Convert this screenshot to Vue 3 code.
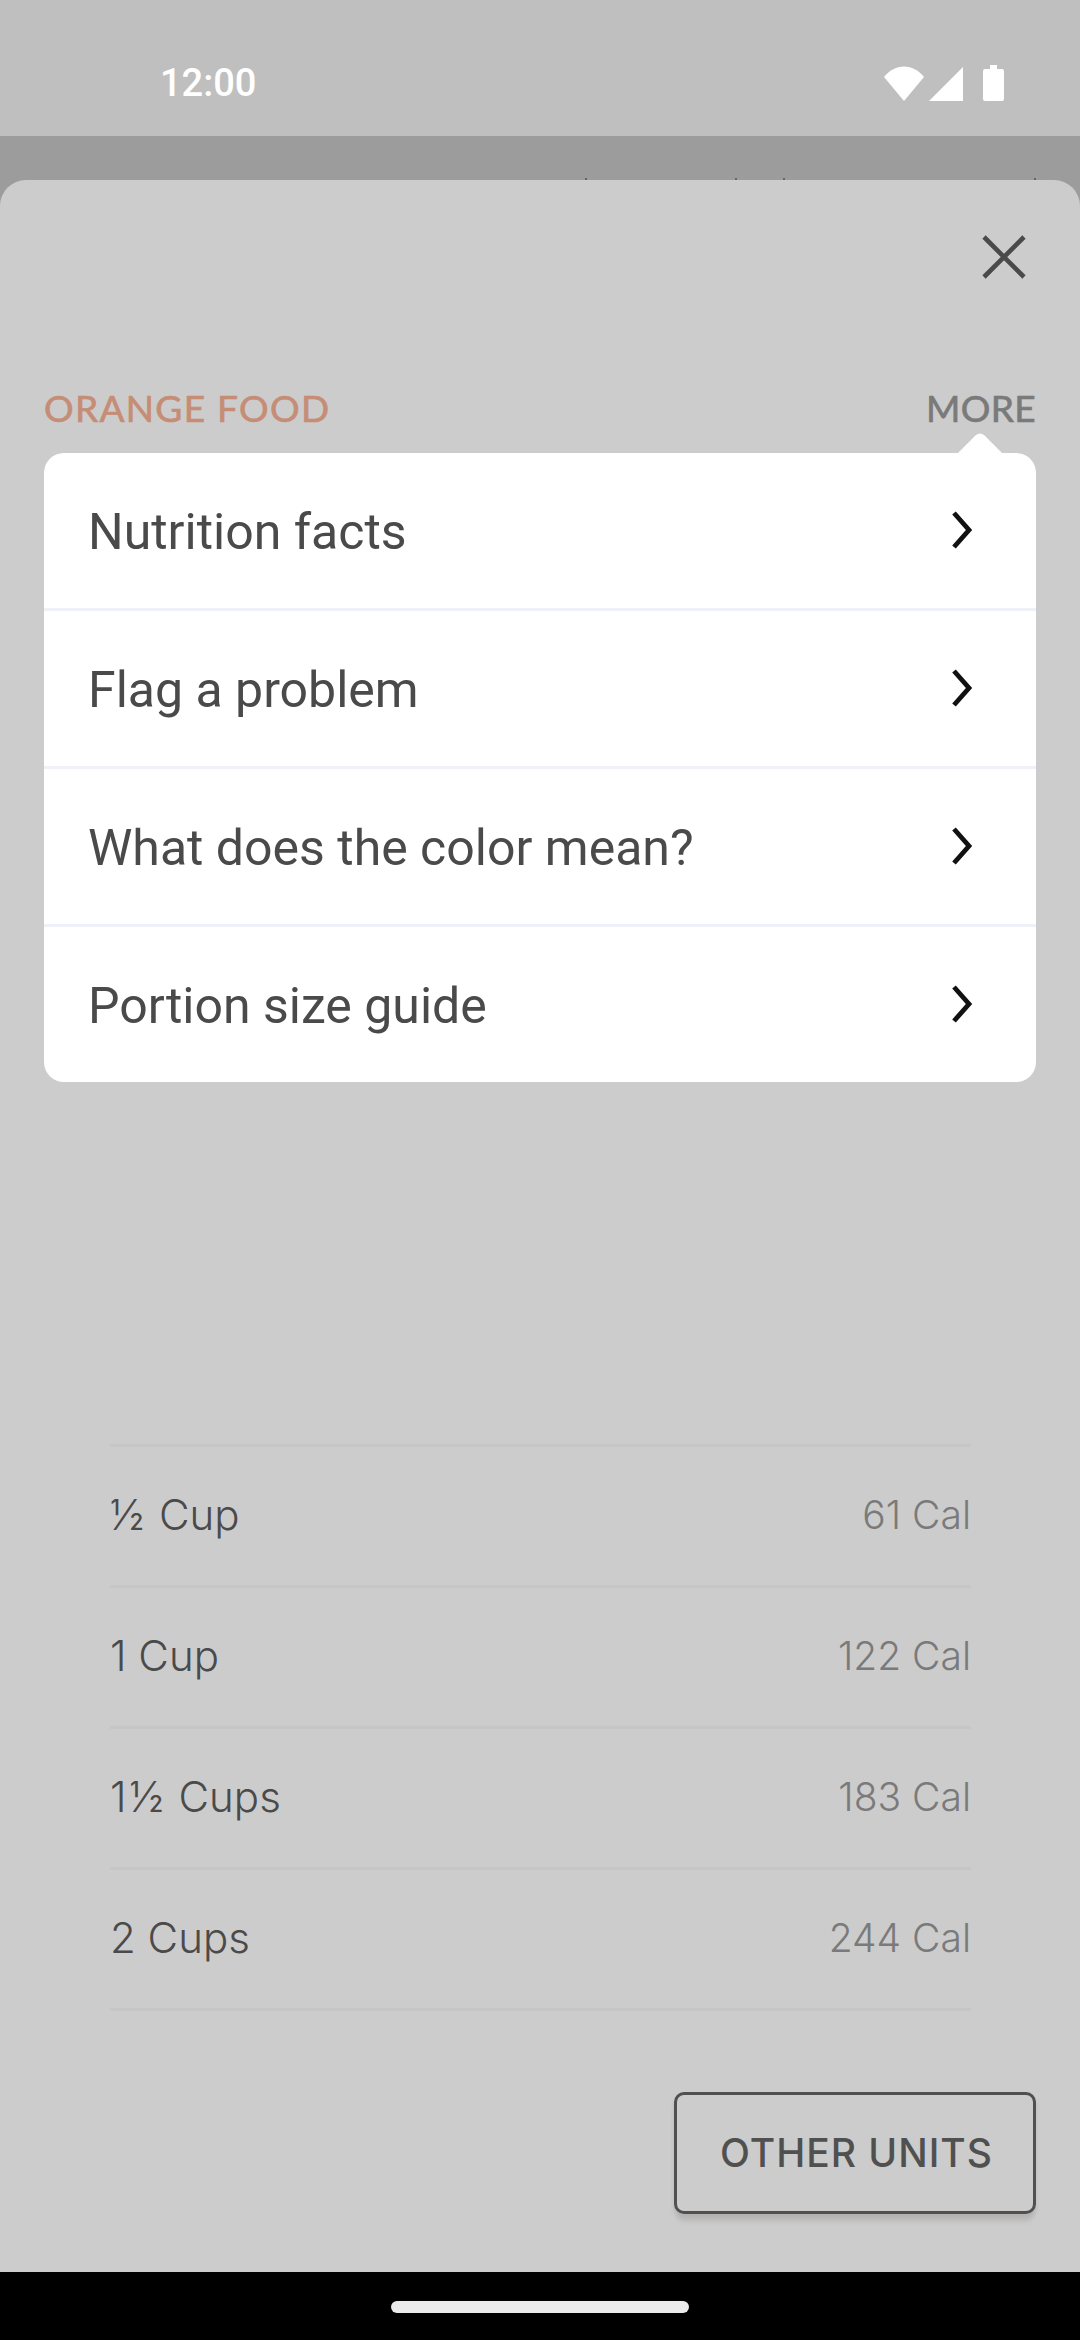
<script setup>
const menu = ['Nutrition facts', 'Flag a problem', 'What does the color mean?', 'Portion size guide']
const portions = [
  { frac: '½', label: ' Cup', cal: '61 Cal' },
  { frac: '', label: '1 Cup', cal: '122 Cal' },
  { frac: '1½', label: ' Cups', cal: '183 Cal' },
  { frac: '', label: '2 Cups', cal: '244 Cal' }
]
const specks = [585, 735, 783, 1034]
</script>

<template>
  <div class="screen">
    <div class="status">
      <span class="time">12:00</span>
      <div class="status-icons">
        <svg width="40" height="35" viewBox="0 0 40 35"><path d="M0 11 C11 -3 29 -3 40 11 L20 35 Z" fill="#fff"/></svg>
        <svg class="signal" width="34" height="34" viewBox="0 0 34 34"><path d="M34 0 V34 H0 Z" fill="#fff"/></svg>
        <svg class="battery" width="21" height="36" viewBox="0 0 21 36"><path d="M7 0 H14 V4 H19 Q21 4 21 6 V34 Q21 36 19 36 H2 Q0 36 0 34 V6 Q0 4 2 4 H7 Z" fill="#fff"/></svg>
      </div>
    </div>
    <div class="band">
      <i v-for="x in specks" :key="x" class="speck" :style="{ left: x + 'px' }"></i>
    </div>
    <div class="sheet">
      <div class="close-row">
        <svg width="44" height="44" viewBox="0 0 44 44"><path d="M2 2 L42 42 M42 2 L2 42" stroke="#4a4a4a" stroke-width="4.6" fill="none"/></svg>
      </div>
      <div class="head">
        <span class="food">ORANGE FOOD</span>
        <span class="more">MORE</span>
      </div>
      <div class="menu">
        <svg class="pointer" width="46" height="21" viewBox="0 0 46 21"><path d="M0 21 L19 2 Q23 -1 27 2 L46 21 Z" fill="#fff"/></svg>
        <div v-for="item in menu" :key="item" class="menu-row">
          <span>{{ item }}</span>
          <svg width="24" height="40" viewBox="0 0 24 40"><path d="M4 3 L19 20 L4 37" stroke="#111" stroke-width="4.8" fill="none"/></svg>
        </div>
      </div>
      <div class="portions">
        <div v-for="p in portions" :key="p.label" class="portion">
          <span class="label"><span class="frac">{{ p.frac }}</span>{{ p.label }}</span>
          <span class="cal">{{ p.cal }}</span>
        </div>
      </div>
      <div class="actions">
        <div class="units">OTHER UNITS</div>
      </div>
    </div>
    <div class="nav"><div class="pill"></div></div>
  </div>
</template>

<style scoped>
.screen {
  width: 1080px;
  height: 2340px;
  display: flex;
  flex-direction: column;
  overflow: hidden;
  background: #9c9c9c;
}
.status {
  height: 136px;
  flex: none;
  background: #bfbfbf;
  display: flex;
  align-items: center;
  justify-content: space-between;
  padding: 29px 76px 0 160px;
  box-sizing: border-box;
}
.time {
  font: 500 38px Roboto, sans-serif;
  color: #fff;
}
.status-icons {
  display: flex;
  align-items: flex-end;
}
.signal { margin-left: 5px; }
.battery { margin-left: 20px; }
.band {
  position: relative;
  height: 44px;
  flex: none;
  background: #9c9c9c;
}
.speck {
  position: absolute;
  bottom: 0;
  width: 2px;
  height: 2px;
  background: #666;
}
.sheet {
  flex: 1;
  background: #ccc;
  border-radius: 26px 26px 0 0;
  padding: 0 44px;
  box-sizing: border-box;
  display: flex;
  flex-direction: column;
}
.close-row {
  display: flex;
  justify-content: flex-end;
  padding-top: 55px;
  padding-right: 10px;
}
.head {
  display: flex;
  justify-content: space-between;
  margin-top: 102px;
  height: 54px;
  line-height: 54px;
  font-family: Lato, sans-serif;
  font-size: 37px;
  font-weight: 400;
  -webkit-text-stroke: 0.7px currentColor;
}
.food { color: #c68d76; letter-spacing: 1.3px; }
.more { color: #7a7a7a; letter-spacing: 0.4px; }
.menu {
  position: relative;
  margin-top: 18px;
  background: #fff;
  border-radius: 20px;
}
.pointer {
  position: absolute;
  top: -20px;
  right: 33px;
}
.menu-row {
  height: 158px;
  box-sizing: border-box;
  padding: 2px 62px 0 44px;
  display: flex;
  align-items: center;
  justify-content: space-between;
  border-bottom: 3px solid #eef1f7;
  font: 400 50px Roboto, sans-serif;
  color: #4a4a4a;
}
.menu-row svg { margin-top: -3px; }
.menu-row:last-child { border-bottom: 0; height: 155px; }
.portions {
  margin: 362px 65px 0 66px;
  border-top: 3px solid #c6c6c6;
}
.portion {
  height: 141px;
  box-sizing: border-box;
  border-bottom: 3px solid #c6c6c6;
  padding-bottom: 3px;
  display: flex;
  align-items: center;
  justify-content: space-between;
  font-family: Inter, sans-serif;
  font-weight: 300;
}
.label { font-size: 42px; color: #4a4a4a; white-space: pre; }
.frac { letter-spacing: 3px; }
.cal { font-size: 39px; color: #7a7a7a; }
.actions {
  display: flex;
  justify-content: flex-end;
  margin-top: 81px;
}
.units {
  width: 362px;
  height: 122px;
  box-sizing: border-box;
  border: 3px solid #505050;
  border-radius: 10px;
  padding: 0 0 2px 3px;
  display: flex;
  align-items: center;
  justify-content: center;
  font: 500 39px Inter, sans-serif;
  letter-spacing: 1px;
  color: #505050;
  box-shadow: 0 5px 4px rgba(70, 60, 50, 0.12), 0 12px 5px -3px rgba(0, 0, 0, 0.04);
}
.nav {
  height: 68px;
  flex: none;
  background: #000;
  display: flex;
  justify-content: center;
  padding-top: 29px;
  box-sizing: border-box;
}
.pill {
  width: 298px;
  height: 12px;
  border-radius: 6px;
  background: #ebebeb;
}
</style>
